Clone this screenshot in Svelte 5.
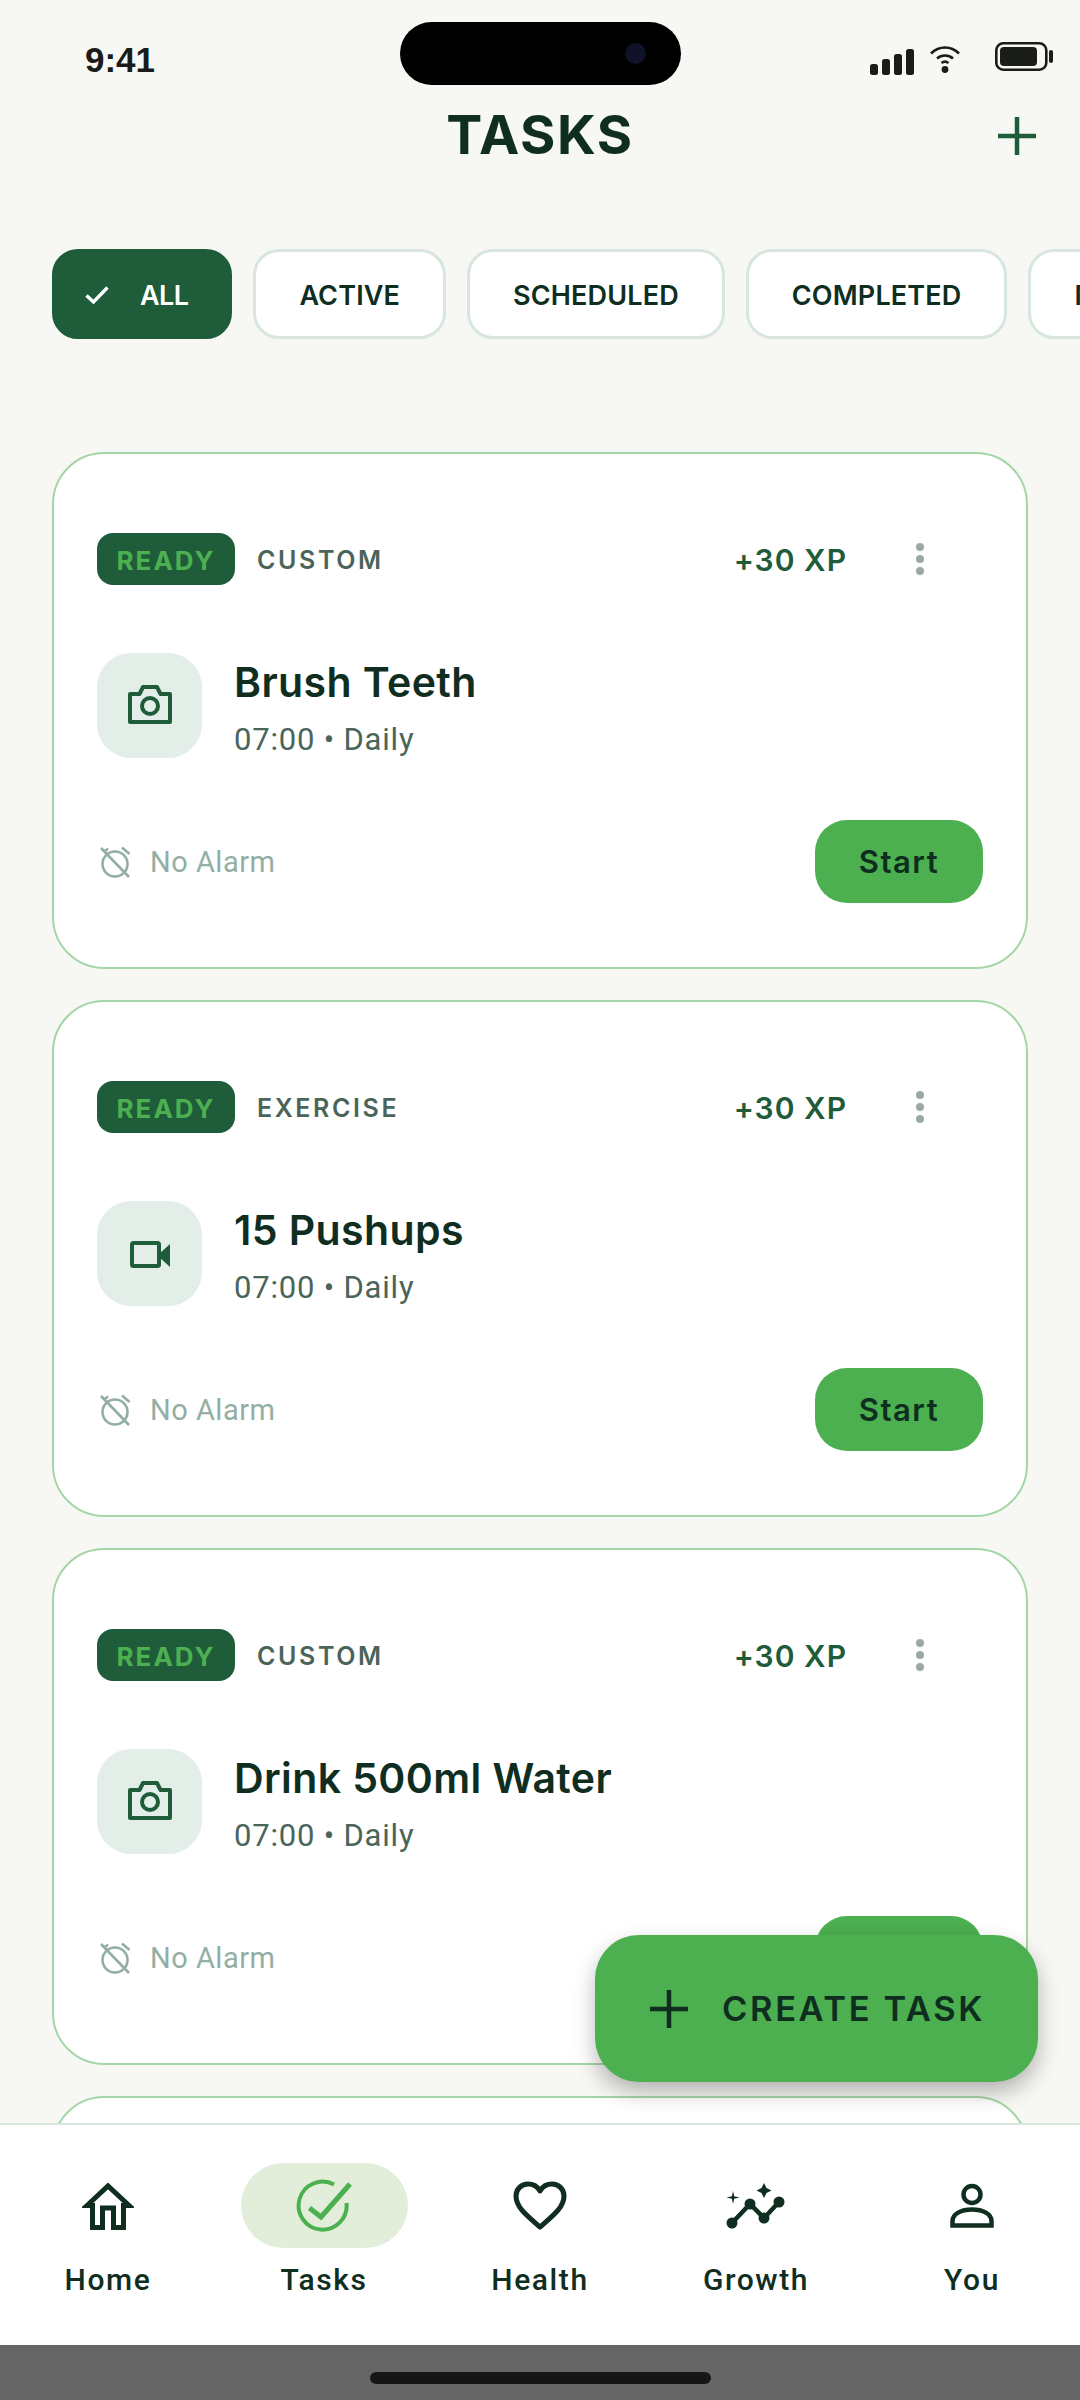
<script>
  const chips = ["ACTIVE", "SCHEDULED", "COMPLETED", "MISSED"];

  const tasks = [
    { title: "Brush Teeth", kind: "CUSTOM", icon: "camera" },
    { title: "15 Pushups", kind: "EXERCISE", icon: "video" },
    { title: "Drink 500ml Water", kind: "CUSTOM", icon: "camera" }
  ];

  const navItems = ["Home", "Tasks", "Health", "Growth", "You"];
</script>

<div class="screen">
  <div class="status">
    <span class="time">9:41</span>
    <div class="island"><span class="lens"></span></div>
    <div class="status-icons">
      <svg width="44" height="26" viewBox="0 0 44 26" fill="#1a1c1a">
        <rect x="0" y="15" width="8" height="11" rx="2.5" />
        <rect x="12" y="10" width="8" height="16" rx="2.5" />
        <rect x="24" y="5" width="8" height="21" rx="2.5" />
        <rect x="36" y="0" width="8" height="26" rx="2.5" />
      </svg>
      <svg class="wifi" width="30" height="29" viewBox="0 0 30 29" fill="none" stroke="#1a1c1a" stroke-width="2.6">
        <path d="M1 9.5C9 1.5 21 1.5 29 9.5" />
        <path d="M7 14.5C11.5 10.5 18.5 10.5 23 14.5" />
        <path d="M11.5 19C13.5 17.5 16.5 17.5 18.5 19" />
        <circle cx="15" cy="25.5" r="3.4" fill="#1a1c1a" stroke="none" />
      </svg>
      <svg class="battery" width="58" height="29" viewBox="0 0 58 29">
        <rect x="1.3" y="1.3" width="50" height="26.4" rx="7" fill="none" stroke="#1a1c1a" stroke-width="2.6" />
        <rect x="5" y="5" width="37" height="19" rx="4" fill="#1a1c1a" />
        <rect x="54" y="8" width="4" height="13" rx="2" fill="#1a1c1a" />
      </svg>
    </div>
  </div>

  <header class="topbar">
    <h1>TASKS</h1>
    <svg class="add" width="38" height="38" viewBox="0 0 38 38" stroke="#1f5c3a" stroke-width="4.5">
      <path d="M19 0V38M0 19H38" />
    </svg>
  </header>

  <div class="chips">
    <div class="chip active">
      <svg width="24" height="18" viewBox="0 0 24 18" fill="none" stroke="#fff" stroke-width="3.4">
        <path d="M1.5 9.5L8.5 16L22.5 1.5" />
      </svg>
      <span>ALL</span>
    </div>
    {#each chips as chip}
      <div class="chip">{chip}</div>
    {/each}
  </div>

  <div class="list">
    {#each tasks as task}
      <article class="card">
        <div class="card-top">
          <span class="badge">READY</span>
          <span class="kind">{task.kind}</span>
          <span class="xp">+30 XP</span>
          <span class="kebab"><i></i><i></i><i></i></span>
        </div>

        <div class="card-main">
          <div class="thumb">
            {#if task.icon === "camera"}
              <svg width="48" height="48" viewBox="0 1.5 48 48" fill="none" stroke="#1f5c3a" stroke-width="4" stroke-linejoin="round">
                <path d="M4 13.5H13.5L17 6.5H31L34.5 13.5H44V41.5H4Z" />
                <circle cx="24" cy="25.5" r="8" />
              </svg>
            {:else}
              <svg width="48" height="48" viewBox="0 0 48 48">
                <rect x="6" y="13" width="27" height="23" rx="1.5" fill="none" stroke="#1f5c3a" stroke-width="4" />
                <path d="M33 24L44 14V37L33 27Z" fill="#1f5c3a" />
              </svg>
            {/if}
          </div>
          <div class="info">
            <h2>{task.title}</h2>
            <p>07:00 • Daily</p>
          </div>
        </div>

        <div class="card-bottom">
          <div class="alarm">
            <svg width="32" height="34" viewBox="0 0 32 34" fill="none" stroke="#93aea2" stroke-width="2.6">
              <circle cx="16" cy="19" r="12.5" />
              <path d="M2 3L30 32" />
              <path d="M23 2.5L30.5 9" />
              <path d="M9 3.5L6 6" />
            </svg>
            <span>No Alarm</span>
          </div>
          <button class="start">Start</button>
        </div>
      </article>
    {/each}
    <article class="card"></article>
  </div>

  <button class="fab">
    <svg width="38" height="38" viewBox="0 0 38 38" stroke="#0f2e1f" stroke-width="4.5">
      <path d="M19 0V38M0 19H38" />
    </svg>
    <span>CREATE TASK</span>
  </button>

  <nav class="nav">
    {#each navItems as item}
      <div class="nav-item">
        <div class="nav-icon" class:current={item === "Tasks"}>
          {#if item === "Home"}
            <svg width="52" height="48" viewBox="0 0 52 48" fill="none" stroke="#0f2e1f" stroke-width="5">
              <path d="M5 23.5L26 4L47 23.5H41.5V45.5H31.5V26H20.5V45.5H10.5V23.5Z" />
            </svg>
          {:else if item === "Tasks"}
            <svg width="56" height="56" viewBox="0 0 56 56" fill="none" stroke="#4caf50" stroke-width="4">
              <path d="M50.5 25A24 24 0 1 1 38 6.5" />
              <path d="M13.5 30L25 39L54 6" stroke-width="5" />
            </svg>
          {:else if item === "Health"}
            <svg width="54" height="50" viewBox="0 0 54 50" fill="none" stroke="#0f2e1f" stroke-width="5" stroke-linejoin="round">
              <path d="M27 46C13 34 3 26 3 15C3 8 8.5 3 15 3C20 3 24.5 5.5 27 10C29.5 5.5 34 3 39 3C45.5 3 51 8 51 15C51 26 41 34 27 46Z" />
            </svg>
          {:else if item === "Growth"}
            <svg width="60" height="48" viewBox="0 0 60 48" fill="#0f2e1f">
              <path d="M6 41L24 22L38 36L53 20" fill="none" stroke="#0f2e1f" stroke-width="4.5" />
              <circle cx="6" cy="41" r="5.5" />
              <circle cx="24" cy="22" r="5.5" />
              <circle cx="38" cy="36" r="5.5" />
              <circle cx="53" cy="20" r="5.5" />
              <path d="M38 1L40.5 6L45.5 8.5L40.5 11L38 16L35.5 11L30.5 8.5L35.5 6Z" />
              <path d="M7 9L8.2 14.3L13.5 15.5L8.2 16.7L7 22L5.8 16.7L.5 15.5L5.8 14.3Z" />
            </svg>
          {:else}
            <svg width="46" height="46" viewBox="0 0 46 46" fill="none" stroke="#0f2e1f" stroke-width="4.5">
              <circle cx="23" cy="11.5" r="8.5" />
              <path d="M3.5 42.5V38C3.5 31 12 26.5 23 26.5C34 26.5 42.5 31 42.5 38V42.5Z" />
            </svg>
          {/if}
        </div>
        <span class="nav-label">{item}</span>
      </div>
    {/each}
  </nav>

  <div class="home-area"><span class="home-bar"></span></div>
</div>

<style>
  :global(body) {
    margin: 0;
    background: #f7f8f4;
  }
  .screen {
    position: relative;
    width: 1080px;
    height: 2400px;
    display: flex;
    flex-direction: column;
    overflow: hidden;
    background: #f7f8f4;
    font-family: Inter, "Liberation Sans", sans-serif;
    color: #0f2e1f;
  }
  .status {
    position: relative;
    height: 90px;
    flex: none;
  }
  .time {
    position: absolute;
    left: 85px;
    top: 40px;
    font: 700 35px/40px "Liberation Sans", sans-serif;
    color: #1a1c1a;
  }
  .island {
    position: absolute;
    left: 400px;
    top: 22px;
    width: 281px;
    height: 63px;
    border-radius: 32px;
    background: #000;
  }
  .lens {
    position: absolute;
    left: 225px;
    top: 21px;
    width: 21px;
    height: 21px;
    border-radius: 50%;
    background: #10122a;
  }
  .status-icons {
    position: absolute;
    left: 870px;
    top: 42px;
    display: flex;
    align-items: flex-start;
  }
  .status-icons > svg:first-child {
    margin-top: 7px;
  }
  .wifi {
    margin-left: 16px;
    margin-top: 2px;
  }
  .battery {
    margin-left: 35px;
  }
  .topbar {
    position: relative;
    height: 90px;
    flex: none;
    display: flex;
    align-items: center;
    justify-content: center;
  }
  h1 {
    margin: 0;
    font-size: 54px;
    font-weight: 700;
    letter-spacing: 1.5px;
    line-height: 90px;
  }
  .add {
    position: absolute;
    right: 44px;
    top: 27px;
  }
  .chips {
    flex: none;
    margin-top: 69px;
    height: 90px;
    padding-left: 52px;
    display: flex;
    gap: 21px;
    overflow: hidden;
  }
  .chip {
    flex: none;
    box-sizing: border-box;
    height: 90px;
    padding: 2px 43px 0;
    display: flex;
    align-items: center;
    gap: 31px;
    border: 3px solid #d8e6df;
    border-radius: 26px;
    background: #fff;
    font-size: 27px;
    font-weight: 600;
    letter-spacing: 0.15px;
  }
  .chip.active {
    padding: 2px 41px 0 30px;
    border-color: #1f5c3a;
    background: #1f5c3a;
    color: #fff;
    letter-spacing: -0.6px;
  }
  .list {
    flex: 1;
    min-height: 0;
    margin-top: 113px;
    padding: 0 52px;
    display: flex;
    flex-direction: column;
    gap: 31px;
    overflow: hidden;
  }
  .card {
    flex: none;
    box-sizing: border-box;
    height: 517px;
    padding: 79px 43px 0;
    border: 2px solid #a5d6a7;
    border-radius: 52px;
    background: #fff;
  }
  .card-top {
    display: flex;
    align-items: center;
    height: 52px;
  }
  .badge {
    box-sizing: border-box;
    width: 138px;
    height: 52px;
    padding-top: 2px;
    display: flex;
    align-items: center;
    justify-content: center;
    border-radius: 16px;
    background: #1f5c3a;
    color: #4caf50;
    font-size: 26px;
    font-weight: 700;
    letter-spacing: 2px;
  }
  .kind {
    margin-left: 22px;
    padding-top: 2px;
    color: #4a6459;
    font-size: 25px;
    font-weight: 600;
    letter-spacing: 2.6px;
  }
  .xp {
    margin-left: auto;
    padding-top: 2px;
    color: #1f5c3a;
    font-size: 30px;
    font-weight: 600;
    letter-spacing: 1px;
  }
  .kebab {
    width: 8px;
    margin: 0 59px 0 69px;
    display: flex;
    flex-direction: column;
    gap: 4px;
  }
  .kebab i {
    width: 8px;
    height: 8px;
    border-radius: 50%;
    background: #9aaaa3;
  }
  .card-main {
    height: 105px;
    margin-top: 68px;
    display: flex;
    align-items: center;
    gap: 32px;
  }
  .thumb {
    width: 105px;
    height: 105px;
    flex: none;
    display: flex;
    align-items: center;
    justify-content: center;
    border-radius: 34px;
    background: #e4eee9;
  }
  h2 {
    margin: 2px 0 0;
    font-size: 41px;
    font-weight: 600;
    letter-spacing: 0.4px;
    line-height: 56px;
  }
  .info p {
    margin: 10px 0 0;
    color: #4a6459;
    font-family: Roboto, sans-serif;
    font-size: 31px;
    letter-spacing: 0.8px;
    line-height: 40px;
  }
  .card-bottom {
    margin-top: 62px;
    display: flex;
    align-items: center;
    justify-content: space-between;
  }
  .alarm {
    display: flex;
    align-items: center;
    gap: 19px;
    color: #93aea2;
    font-family: Roboto, sans-serif;
    font-size: 29px;
    letter-spacing: 0.5px;
  }
  .alarm svg {
    margin-left: 2px;
  }
  .start {
    width: 168px;
    height: 83px;
    padding: 0;
    border: none;
    border-radius: 32px;
    background: #4caf50;
    color: #0f2e1f;
    font-family: inherit;
    font-size: 31px;
    font-weight: 600;
    letter-spacing: 1.5px;
  }
  .fab {
    position: absolute;
    left: 595px;
    top: 1935px;
    width: 443px;
    height: 147px;
    padding: 0 0 0 55px;
    display: flex;
    align-items: center;
    gap: 34px;
    border: none;
    border-radius: 44px;
    background: #4caf50;
    color: #0f2e1f;
    font-family: inherit;
    font-size: 34.5px;
    font-weight: 600;
    letter-spacing: 2.6px;
    box-shadow: 0 10px 22px rgba(0, 0, 0, 0.28);
  }
  .nav {
    position: relative;
    flex: none;
    box-sizing: border-box;
    height: 222px;
    padding-top: 38px;
    display: flex;
    border-top: 2px solid #d8e6df;
    background: #fff;
  }
  .nav-item {
    flex: 1;
    display: flex;
    flex-direction: column;
    align-items: center;
  }
  .nav-icon {
    width: 167px;
    height: 85px;
    display: flex;
    align-items: center;
    justify-content: center;
    border-radius: 43px;
  }
  .nav-icon.current {
    background: #e2eed9;
  }
  .nav-label {
    margin-top: 12px;
    font-family: Roboto, sans-serif;
    font-size: 30px;
    font-weight: 500;
    letter-spacing: 1.6px;
    line-height: 40px;
  }
  .home-area {
    flex: none;
    height: 55px;
    display: flex;
    justify-content: center;
    padding-top: 27px;
    box-sizing: border-box;
    background: #666;
  }
  .home-bar {
    width: 341px;
    height: 12px;
    border-radius: 6px;
    background: #161616;
  }
</style>
